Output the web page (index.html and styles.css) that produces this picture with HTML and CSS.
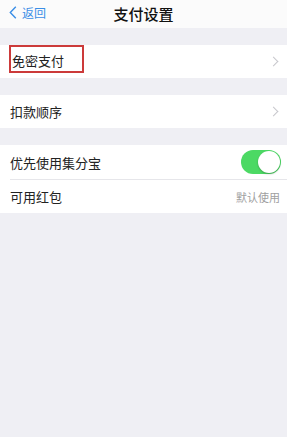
FILE: index.html
```html
<!DOCTYPE html>
<html lang="zh">
<head>
    <meta charset="UTF-8">
    <meta name="viewport" content="width=device-width, initial-scale=1.0">
    <title>支付设置</title>
    <link rel="stylesheet" href="styles.css">
</head>
<body>
    <header class="navbar">
        <a class="back" href="#">
            <svg class="back-icon" width="8" height="13" viewBox="0 0 8 13">
                <path d="M6.8 0.8 L1.3 6.5 L6.8 12.2" fill="none" stroke="#3a8ee6" stroke-width="1.4"/>
            </svg>
            <span>返回</span>
        </a>
        <h1>支付设置</h1>
    </header>

    <div class="group">
        <div class="row">
            <span class="label marked">免密支付</span>
            <span class="chevron"></span>
        </div>
    </div>

    <div class="group">
        <div class="row">
            <span class="label">扣款顺序</span>
            <span class="chevron"></span>
        </div>
    </div>

    <div class="group">
        <div class="row tall">
            <span class="label">优先使用集分宝</span>
            <span class="switch"><span class="knob"></span></span>
        </div>
        <div class="row">
            <span class="label">可用红包</span>
            <span class="value">默认使用</span>
        </div>
    </div>
</body>
</html>
```

FILE: styles.css
```css
body {
    margin: 0;
    background: #efeff4;
    font-family: "Noto Sans CJK SC", "Liberation Sans", sans-serif;
    color: #222;
    min-height: 437px;
}

.navbar {
    position: relative;
    height: 28px;
    background: #fbfbfb;
    display: flex;
    align-items: center;
    justify-content: center;
}

.navbar h1 {
    margin: 0;
    font-size: 15px;
    font-weight: 500;
    color: #111;
    margin-top: -2px;
}

.back {
    position: absolute;
    left: 9px;
    top: 4px;
    display: flex;
    align-items: center;
    gap: 5px;
    color: #3a8ee6;
    text-decoration: none;
    font-size: 12px;
}

.group {
    background: #fff;
    margin-top: 17px;
}

.row {
    height: 33px;
    display: flex;
    align-items: center;
    justify-content: space-between;
    padding: 0 6px 0 10px;
}

.row.tall {
    height: 34px;
}

.row + .row {
    border-top: 1px solid #e6e6ea;
    margin-left: 10px;
    padding-left: 0;
}

.label {
    font-size: 13px;
}

.marked {
    align-self: flex-start;
    box-sizing: border-box;
    height: 28px;
    line-height: 20px;
    padding: 4px 18px 0 1px;
    margin-left: -1px;
    border: 2px solid #cc3a3a;
}

.chevron {
    width: 6px;
    height: 6px;
    border-top: 1.5px solid #c7c7cc;
    border-right: 1.5px solid #c7c7cc;
    transform: rotate(45deg);
    margin-right: 4px;
}

.switch {
    position: relative;
    width: 40px;
    height: 24px;
    border-radius: 12px;
    background: #4cd964;
}

.knob {
    position: absolute;
    right: 1px;
    top: 1px;
    width: 22px;
    height: 22px;
    border-radius: 50%;
    background: #fff;
    box-shadow: 0 1px 2px rgba(0, 0, 0, 0.25);
}

.value {
    font-size: 11px;
    color: #a0a0a0;
    margin-right: 1px;
}
```
